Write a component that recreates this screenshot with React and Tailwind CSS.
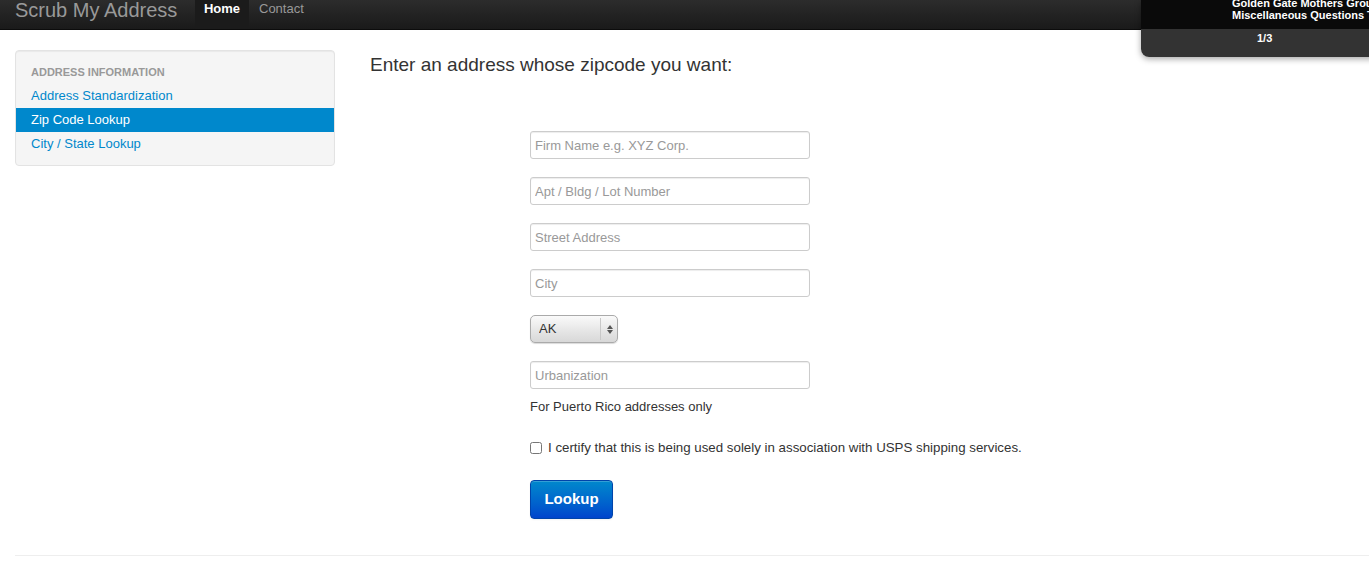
import React, { useState } from "react";

const fieldClass =
  "w-[280px] h-[28px] px-[4px] text-[13px] text-[#555] bg-white border border-[#ccc] rounded-[3px] shadow-[inset_0_1px_1px_rgba(0,0,0,0.075)] placeholder:text-[#999] focus:outline-none";

function App() {
  const [state, setState] = useState("AK");

  return (
    <div className="relative min-h-[562px] w-full bg-white overflow-hidden font-['Liberation_Sans',Arial,sans-serif] text-[#333]">
      {/* Navbar */}
      <div className="h-[30px] w-full flex items-stretch bg-gradient-to-b from-[#2c2c2c] to-[#1a1a1a] border-b border-[#0c0c0c]">
        <div className="w-[195px] shrink-0 pl-[15px] pt-[1px] text-[20px] leading-[18px] text-[#999] whitespace-nowrap">
          Scrub My Address
        </div>
        <div className="flex items-stretch">
          <div className="w-[54px] bg-[#1b1b1b] text-white text-[13px] leading-[16px] font-bold flex items-start justify-center pt-[1px]">
            Home
          </div>
          <div className="px-[10px] text-[#999] text-[13px] leading-[16px] flex items-start pt-[1px]">
            Contact
          </div>
        </div>
      </div>

      {/* Floating overlay at top right */}
      <div className="absolute top-0 left-[1141px] w-[240px] h-[57px] rounded-bl-[8px] overflow-hidden shadow-[0_2px_6px_rgba(0,0,0,0.35)] flex flex-col">
        <div className="h-[29px] bg-[#0a0a0a] pl-[91px] text-white text-[11px] font-bold leading-[12px] whitespace-nowrap overflow-hidden">
          <div className="-mt-[3px]">Golden Gate Mothers Group</div>
          <div>Miscellaneous Questions Thread</div>
        </div>
        <div className="flex-1 bg-[#333] text-white text-[11px] font-bold pl-[116px] pt-[1px]">1/3</div>
      </div>

      {/* Body */}
      <div className="flex px-[15px] pt-[20px] gap-[35px]">
        {/* Sidebar */}
        <div className="w-[320px] shrink-0">
          <div className="bg-[#f5f5f5] border border-[#e3e3e3] rounded-[4px] pt-[13px] pb-[9px] shadow-[inset_0_1px_1px_rgba(0,0,0,0.05)]">
            <div className="px-[15px] text-[11px] font-bold uppercase text-[#999] leading-[16px] mb-[4px]">
              Address Information
            </div>
            <div className="px-[15px] text-[13px] text-[#0088cc] leading-[24px]">Address Standardization</div>
            <div className="px-[15px] text-[13px] text-white bg-[#0088cc] leading-[24px]">Zip Code Lookup</div>
            <div className="px-[15px] text-[13px] text-[#0088cc] leading-[24px]">City / State Lookup</div>
          </div>
        </div>

        {/* Main */}
        <div className="flex-1">
          <h1 className="text-[19px] leading-[28px] mt-[1px] text-[#333]">Enter an address whose zipcode you want:</h1>

          <div className="ml-[160px] mt-[52px] flex flex-col">
            <input className={fieldClass} placeholder="Firm Name e.g. XYZ Corp." />
            <input className={fieldClass + " mt-[18px]"} placeholder="Apt / Bldg / Lot Number" />
            <input className={fieldClass + " mt-[18px]"} placeholder="Street Address" />
            <input className={fieldClass + " mt-[18px]"} placeholder="City" />

            <div className="mt-[18px] relative w-[88px] h-[28px]">
              <select
                value={state}
                onChange={(e) => setState(e.target.value)}
                className="appearance-none w-full h-full pl-[8px] text-[13px] text-[#333] border border-[#aaa] rounded-[5px] bg-gradient-to-b from-[#fafafa] via-[#e8e8e8] to-[#d8d8d8] shadow-[0_1px_1px_rgba(0,0,0,0.15)] focus:outline-none"
              >
                <option>AK</option>
                <option>AL</option>
                <option>AZ</option>
                <option>CA</option>
              </select>
              <div className="absolute right-0 top-[3px] bottom-[3px] w-[18px] border-l border-[#c8c8c8] flex flex-col items-center justify-center gap-[1px] pointer-events-none">
                <svg width="6" height="4" viewBox="0 0 6 4"><path d="M3 0 L6 4 L0 4 Z" fill="#555" /></svg>
                <svg width="6" height="4" viewBox="0 0 6 4"><path d="M0 0 L6 0 L3 4 Z" fill="#555" /></svg>
              </div>
            </div>

            <input className={fieldClass + " mt-[18px]"} placeholder="Urbanization" />
            <div className="text-[13px] leading-[18px] mt-[9px] text-[#333]">For Puerto Rico addresses only</div>

            <label className="mt-[23px] flex items-center gap-[6px] text-[13.3px] leading-[18px] text-[#333]">
              <input type="checkbox" className="w-[12px] h-[12px] m-0 accent-[#0088cc]" />
              I certify that this is being used solely in association with USPS shipping services.
            </label>

            <button className="mt-[23px] w-[83px] h-[39px] rounded-[4px] bg-gradient-to-b from-[#0088cc] to-[#0044cc] border border-[#0044aa] text-white text-[15px] font-bold shadow-[inset_0_1px_0_rgba(255,255,255,0.2),0_1px_2px_rgba(0,0,0,0.05)]">
              Lookup
            </button>
          </div>
        </div>
      </div>

      {/* Footer rule */}
      <div className="ml-[15px] mt-[36px] border-t border-[#eee]" />
    </div>
  );
}

export default App;
